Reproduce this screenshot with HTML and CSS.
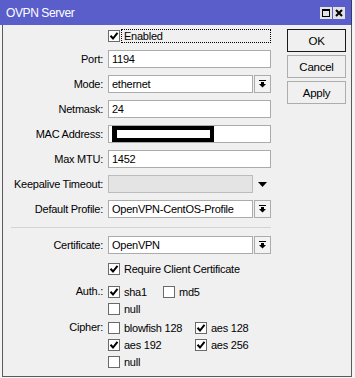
FILE: index.html
```html
<!DOCTYPE html>
<html lang="en">
<head>
    <meta charset="UTF-8">
    <title>OVPN Server</title>
    <link rel="stylesheet" href="styles.css">
</head>
<body>
    <div class="window">
        <div class="titlebar">
            <span class="title">OVPN Server</span>
            <span class="title-btns">
                <span class="tbtn">
                    <svg width="10" height="10" viewBox="0 0 10 10"><path d="M1 1h8v8H1z M2 3v5h6V3z" fill="#000" fill-rule="evenodd"/></svg>
                </span>
                <span class="tbtn">
                    <svg width="10" height="10" viewBox="0 0 10 10"><path d="M2 2l6 6M8 2l-6 6" stroke="#000" stroke-width="2" fill="none"/></svg>
                </span>
            </span>
        </div>

        <div class="content">
            <div class="form">
                <div class="row row-enabled">
                    <span></span>
                    <div class="check">
                        <span class="box"><svg width="10" height="10" viewBox="0 0 10 10"><path d="M1.5 4.8L4 7.5L8.5 1.8" stroke="#000" stroke-width="2" fill="none"/></svg></span>
                        <span class="focus">Enabled</span>
                    </div>
                </div>

                <div class="row">
                    <span class="label">Port:</span>
                    <div class="input">1194</div>
                </div>
                <div class="row">
                    <span class="label">Mode:</span>
                    <div class="select">
                        <div class="input">ethernet</div>
                        <span class="drop"><svg width="7" height="8" viewBox="0 0 7 8"><path d="M0 0h7v1H0z M2 2h3v2h2L3.5 7.5 0 4h2z" fill="#000"/></svg></span>
                    </div>
                </div>
                <div class="row">
                    <span class="label">Netmask:</span>
                    <div class="input">24</div>
                </div>
                <div class="row">
                    <span class="label">MAC Address:</span>
                    <div class="input"><span class="redact"></span></div>
                </div>
                <div class="row">
                    <span class="label">Max MTU:</span>
                    <div class="input">1452</div>
                </div>
                <div class="row">
                    <span class="label">Keepalive Timeout:</span>
                    <div class="select">
                        <div class="input disabled"></div>
                        <span class="arrow"><svg width="9" height="5" viewBox="0 0 9 5"><path d="M0 0h9L4.5 5z" fill="#000"/></svg></span>
                    </div>
                </div>
                <div class="row">
                    <span class="label">Default Profile:</span>
                    <div class="select">
                        <div class="input">OpenVPN-CentOS-Profile</div>
                        <span class="drop"><svg width="7" height="8" viewBox="0 0 7 8"><path d="M0 0h7v1H0z M2 2h3v2h2L3.5 7.5 0 4h2z" fill="#000"/></svg></span>
                    </div>
                </div>

                <div class="separator"></div>

                <div class="row row-cert">
                    <span class="label">Certificate:</span>
                    <div class="select">
                        <div class="input">OpenVPN</div>
                        <span class="drop"><svg width="7" height="8" viewBox="0 0 7 8"><path d="M0 0h7v1H0z M2 2h3v2h2L3.5 7.5 0 4h2z" fill="#000"/></svg></span>
                    </div>
                </div>

                <div class="row row-require">
                    <span></span>
                    <div class="item">
                        <span class="box"><svg width="10" height="10" viewBox="0 0 10 10"><path d="M1.5 4.8L4 7.5L8.5 1.8" stroke="#000" stroke-width="2" fill="none"/></svg></span>
                        <span>Require Client Certificate</span>
                    </div>
                </div>

                <div class="row row-group row-auth">
                    <span class="label">Auth.:</span>
                    <div class="options auth">
                        <div class="item">
                            <span class="box"><svg width="10" height="10" viewBox="0 0 10 10"><path d="M1.5 4.8L4 7.5L8.5 1.8" stroke="#000" stroke-width="2" fill="none"/></svg></span>
                            <span>sha1</span>
                        </div>
                        <div class="item">
                            <span class="box"></span>
                            <span>md5</span>
                        </div>
                        <div class="item">
                            <span class="box"></span>
                            <span>null</span>
                        </div>
                    </div>
                </div>

                <div class="row row-group row-cipher">
                    <span class="label">Cipher:</span>
                    <div class="options cipher">
                        <div class="item">
                            <span class="box"></span>
                            <span>blowfish 128</span>
                        </div>
                        <div class="item">
                            <span class="box"><svg width="10" height="10" viewBox="0 0 10 10"><path d="M1.5 4.8L4 7.5L8.5 1.8" stroke="#000" stroke-width="2" fill="none"/></svg></span>
                            <span>aes 128</span>
                        </div>
                        <div class="item">
                            <span class="box"><svg width="10" height="10" viewBox="0 0 10 10"><path d="M1.5 4.8L4 7.5L8.5 1.8" stroke="#000" stroke-width="2" fill="none"/></svg></span>
                            <span>aes 192</span>
                        </div>
                        <div class="item">
                            <span class="box"><svg width="10" height="10" viewBox="0 0 10 10"><path d="M1.5 4.8L4 7.5L8.5 1.8" stroke="#000" stroke-width="2" fill="none"/></svg></span>
                            <span>aes 256</span>
                        </div>
                        <div class="item">
                            <span class="box"></span>
                            <span>null</span>
                        </div>
                    </div>
                </div>
            </div>

            <div class="buttons">
                <div class="btn default">OK</div>
                <div class="btn">Cancel</div>
                <div class="btn">Apply</div>
            </div>
        </div>
    </div>
</body>
</html>
```

FILE: styles.css
```css
* {
    box-sizing: border-box;
}

body {
    margin: 0;
    background-color: #f4f4f4;
    font-family: "Liberation Sans", Arial, sans-serif;
    font-size: 11px;
    letter-spacing: -0.25px;
    color: #000;
}

.window {
    width: 352px;
    height: 377px;
    display: flex;
    flex-direction: column;
}

.titlebar {
    height: 25px;
    background-color: #595ecb;
    border-right: 1px solid #3a3a6a;
    display: flex;
    align-items: center;
    justify-content: space-between;
    padding: 0 6px 0 6px;
}

.title {
    color: #fff;
    font-size: 12px;
    letter-spacing: -0.4px;
}

.title-btns {
    display: flex;
    gap: 1px;
}

.tbtn {
    width: 12px;
    height: 12px;
    background-color: #e2e2e2;
    display: flex;
    align-items: center;
    justify-content: center;
}

.content {
    flex: 1;
    margin-left: 2px;
    border-left: 1px solid #5a5a5a;
    border-right: 1px solid #5a5a5a;
    border-bottom: 1px solid #5a5a5a;
    background-color: #f0f0f0;
    display: flex;
    padding-top: 4px;
}

.form {
    width: 268px;
    display: flex;
    flex-direction: column;
}

.row {
    display: grid;
    grid-template-columns: 100px 163px;
    column-gap: 5px;
    align-items: center;
    margin-top: 7px;
}

.label {
    text-align: right;
    white-space: nowrap;
}

.row-enabled {
    margin-top: 0;
    height: 14px;
}

.input {
    height: 18px;
    border: 1px solid #ababab;
    background-color: #fff;
    padding-left: 3px;
    line-height: 16px;
    white-space: nowrap;
    overflow: hidden;
}

.input.disabled {
    background-color: #e4e4e4;
    border-color: #bcbcbc;
}

.select {
    display: flex;
    gap: 1px;
}

.select .input {
    width: 145px;
}

.drop {
    width: 17px;
    height: 18px;
    border: 1px solid #acacac;
    background-color: #f3f3f3;
    display: flex;
    align-items: center;
    justify-content: center;
}

.arrow {
    width: 17px;
    height: 18px;
    display: flex;
    align-items: center;
    justify-content: center;
}

.redact {
    display: block;
    width: 102px;
    height: 16px;
    border: 4px solid #000;
    border-left-width: 5px;
    background-color: #fff;
}

.check {
    display: flex;
    align-items: center;
    height: 14px;
}

.box {
    width: 12px;
    height: 12px;
    flex: none;
    border: 1px solid #6a6a6a;
    background-color: #fff;
    display: flex;
    align-items: center;
    justify-content: center;
}

.focus {
    flex: 1;
    height: 14px;
    margin-left: 1px;
    padding-left: 2px;
    border: 1px dotted #000;
    line-height: 12px;
}

.separator {
    margin: 9px 0 0 8px;
    width: 260px;
    border-top: 1px solid #d4d4d4;
}

.row-cert {
    margin-top: 8px;
}

.item {
    display: flex;
    align-items: center;
    gap: 4px;
    height: 17px;
    white-space: nowrap;
}

.row-require {
    margin-top: 6px;
}

.row-group {
    align-items: start;
}

.row-group .label {
    line-height: 17px;
}

.row-auth {
    margin-top: 6px;
}

.row-cipher {
    margin-top: 2px;
}

.options {
    display: grid;
}

.auth {
    grid-template-columns: 55px auto;
}

.cipher {
    grid-template-columns: 87px auto;
}

.buttons {
    margin-left: 16px;
    width: 59px;
    display: flex;
    flex-direction: column;
    gap: 3px;
}

.btn {
    height: 23px;
    border: 1px solid #adadad;
    background-color: #f0f0f0;
    display: flex;
    align-items: center;
    justify-content: center;
    font-size: 11.5px;
}

.btn.default {
    border-color: #1a1a1a;
}
```
